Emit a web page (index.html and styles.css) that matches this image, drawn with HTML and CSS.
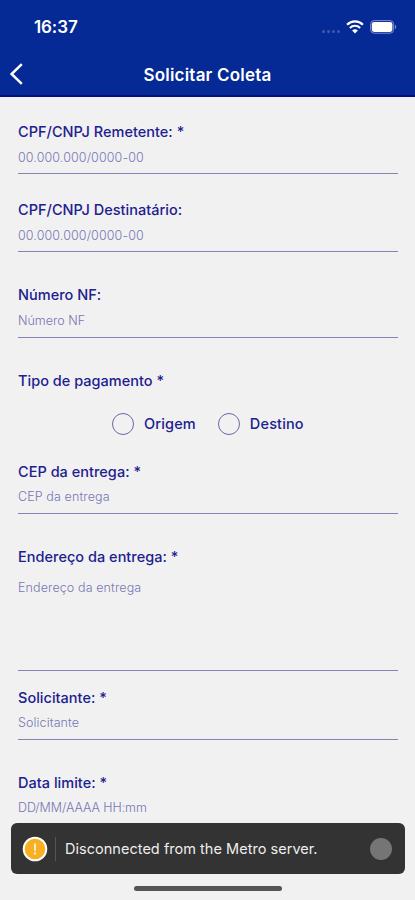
FILE: index.html
```html
<!DOCTYPE html>
<html lang="pt-BR">
<head>
<meta charset="utf-8">
<meta name="viewport" content="width=device-width, initial-scale=1">
<title>Solicitar Coleta</title>
<link rel="stylesheet" href="styles.css">
</head>
<body>
<div class="screen">
  <header class="header">
    <div class="status">
      <span class="time">16:37</span>
      <div class="indicators">
        <span class="signal"><i></i><i></i><i></i><i></i></span>
        <svg class="wifi" width="18" height="14" viewBox="0 0 18 14" fill="none" stroke="#fff">
          <path d="M1.1 4.7a11.2 11.2 0 0 1 15.8 0" stroke-width="2.3"/>
          <path d="M3.9 7.9a7.2 7.2 0 0 1 10.2 0" stroke-width="2.1"/>
          <path d="M9 13.6 6.1 10.6a4.1 4.1 0 0 1 5.8 0z" fill="#fff" stroke="none"/>
        </svg>
        <svg class="battery" width="27" height="14" viewBox="0 0 27 14">
          <rect x=".6" y=".6" width="23" height="12.6" rx="3.6" fill="none" stroke="#7f8fce" stroke-width="1"/>
          <rect x="1.8" y="1.9" width="20.6" height="10" rx="2.3" fill="#fff"/>
          <path d="M24.9 4.7c1.8.6 1.8 3.8 0 4.4z" fill="#7f8fce"/>
        </svg>
      </div>
    </div>
    <div class="nav">
      <svg class="back" width="14" height="22" viewBox="0 0 14 22" fill="none" stroke="#fff" stroke-width="2.5"><path d="M12.8 1.2 2.6 11l10.2 9.8"/></svg>
      <h1>Solicitar Coleta</h1>
    </div>
  </header>
  <main class="form">
    <div class="field remetente"><span class="label">CPF/CNPJ Remetente: *</span><span class="hint">00.000.000/0000-00</span></div>
    <div class="field destinatario"><span class="label">CPF/CNPJ Destinatário:</span><span class="hint">00.000.000/0000-00</span></div>
    <div class="field nf"><span class="label">Número NF:</span><span class="hint">Número NF</span></div>
    <div class="payment">
      <span class="label">Tipo de pagamento *</span>
      <div class="options">
        <div class="option"><span class="radio"></span><span class="label">Origem</span></div>
        <div class="option"><span class="radio"></span><span class="label">Destino</span></div>
      </div>
    </div>
    <div class="field cep"><span class="label">CEP da entrega: *</span><span class="hint">CEP da entrega</span></div>
    <div class="field endereco"><span class="label">Endereço da entrega: *</span><span class="hint">Endereço da entrega</span></div>
    <div class="field solicitante"><span class="label">Solicitante: *</span><span class="hint">Solicitante</span></div>
    <div class="field data"><span class="label">Data limite: *</span><span class="hint">DD/MM/AAAA HH:mm</span></div>
  </main>
  <div class="toast">
    <svg width="26" height="26" viewBox="0 0 26 26"><circle cx="13" cy="13" r="11.3" fill="#f8af20" stroke="#fff" stroke-width="2"/><path d="M11.9 7.4h2.2l-.3 7.6h-1.6zM11.9 16.3h2.2v2.1h-2.2z" fill="#fff3d5"/></svg>
    <span class="divider"></span>
    <span class="message">Disconnected from the Metro server.</span>
    <span class="dismiss"></span>
  </div>
  <div class="home"></div>
</div>
</body>
</html>
```
FILE: styles.css
```css
* { box-sizing: border-box; }
body { margin: 0; font-family: Inter, "Liberation Sans", sans-serif; background: #f1f1f1; }
.screen { position: relative; width: 415px; height: 900px; overflow: hidden; }
.header { height: 97px; background: #052995; border-bottom: 2px solid #02107f; color: #fff; }
.status { height: 54px; padding: 0 18px 0 34px; display: flex; align-items: center; justify-content: space-between; }
.time { font-size: 17px; line-height: 20px; font-weight: 600; letter-spacing: -.1px; }
.indicators { display: flex; align-items: center; }
.signal { display: flex; gap: 2px; margin: 8px 6px 0 0; }
.signal i { width: 3px; height: 3px; border-radius: 50%; background: #405ab0; }
.wifi { margin-right: 6px; }
.nav { height: 41px; display: grid; grid-template-columns: 40px 1fr 40px; align-items: center; }
.back { margin: -2px 0 0 9px; }
h1 { margin: 0; text-align: center; font-size: 17px; line-height: 22px; font-weight: 600; letter-spacing: .2px; }
.form { padding: 25px 17px 0 18px; color: #20208f; }
.label { display: block; font-size: 14.5px; line-height: 20px; font-weight: 500; letter-spacing: .02px; white-space: nowrap; }
.hint { display: block; margin-top: 6px; font-size: 12.5px; line-height: 20px; font-weight: 300; letter-spacing: .11px; color: #7777b4; white-space: nowrap; }
.field { height: 53px; border-bottom: 1px solid #8585b5; }
.remetente { height: 52px; }
.destinatario { margin-top: 26px; height: 52px; }
.nf { margin-top: 33px; }
.nf .hint { letter-spacing: 0; }
.payment { margin-top: 33px; height: 91px; }
.options { display: flex; gap: 22px; padding: 22px 0 0 94px; }
.option { display: flex; align-items: center; gap: 10px; }
.option .label { letter-spacing: .15px; }
.radio { width: 22px; height: 22px; border: 1px solid #6868aa; border-radius: 50%; }
.cep { height: 52px; }
.cep .hint, .data .hint { margin-top: 5px; }
.endereco { margin-top: 33px; height: 124px; }
.endereco .hint { margin-top: 11px; }
.solicitante { margin-top: 17px; height: 52px; }
.solicitante .hint { margin-top: 5px; }
.data { margin-top: 33px; }
.data .hint { letter-spacing: -.08px; }
.toast { position: absolute; left: 11px; top: 823px; width: 394px; height: 51px; padding: 0 13px 0 11px; display: flex; align-items: center; border-radius: 6px; background: #333; color: #eee; }
.divider { width: 1px; height: 24px; margin: 0 9px 0 7px; background: #555; }
.message { font-size: 14.5px; line-height: 20px; letter-spacing: .03px; white-space: nowrap; }
.dismiss { width: 22px; height: 22px; margin-left: auto; border-radius: 50%; background: #757575; }
.home { position: absolute; left: 134px; top: 886px; width: 148px; height: 5px; border-radius: 3px; background: #555; }
```
